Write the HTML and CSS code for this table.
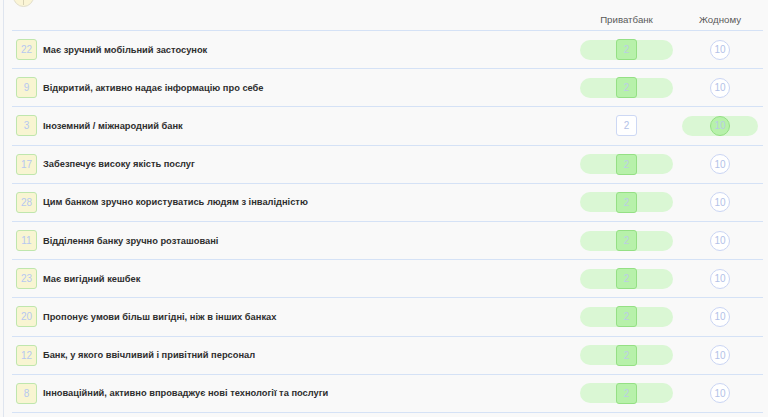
FILE: index.html
```html
<!DOCTYPE html>
<html lang="uk">
<head>
<meta charset="utf-8">
<link rel="stylesheet" href="styles.css">
</head>
<body>
<div class="frame">
  <div class="table">
    <div class="head">
      <div class="head-left"><span class="top-icon"></span></div>
      <div class="hcol">Приватбанк</div>
      <div class="hcol">Жодному</div>
    </div>

    <div class="row">
      <div class="label"><span class="badge">22</span><span class="text">Має зручний мобільний застосунок</span></div>
      <div class="cell"><span class="pill pill-a"><span class="sq sq-on">2</span></span></div>
      <div class="cell"><span class="circ">10</span></div>
    </div>
    <div class="row">
      <div class="label"><span class="badge">9</span><span class="text">Відкритий, активно надає інформацію про себе</span></div>
      <div class="cell"><span class="pill pill-a"><span class="sq sq-on">2</span></span></div>
      <div class="cell"><span class="circ">10</span></div>
    </div>
    <div class="row">
      <div class="label"><span class="badge">3</span><span class="text">Іноземний / міжнародний банк</span></div>
      <div class="cell"><span class="sq">2</span></div>
      <div class="cell"><span class="pill pill-b"><span class="circ circ-on">10</span></span></div>
    </div>
    <div class="row">
      <div class="label"><span class="badge">17</span><span class="text">Забезпечує високу якість послуг</span></div>
      <div class="cell"><span class="pill pill-a"><span class="sq sq-on">2</span></span></div>
      <div class="cell"><span class="circ">10</span></div>
    </div>
    <div class="row">
      <div class="label"><span class="badge">28</span><span class="text">Цим банком зручно користуватись людям з інвалідністю</span></div>
      <div class="cell"><span class="pill pill-a"><span class="sq sq-on">2</span></span></div>
      <div class="cell"><span class="circ">10</span></div>
    </div>
    <div class="row">
      <div class="label"><span class="badge">11</span><span class="text">Відділення банку зручно розташовані</span></div>
      <div class="cell"><span class="pill pill-a"><span class="sq sq-on">2</span></span></div>
      <div class="cell"><span class="circ">10</span></div>
    </div>
    <div class="row">
      <div class="label"><span class="badge">23</span><span class="text">Має вигідний кешбек</span></div>
      <div class="cell"><span class="pill pill-a"><span class="sq sq-on">2</span></span></div>
      <div class="cell"><span class="circ">10</span></div>
    </div>
    <div class="row">
      <div class="label"><span class="badge">20</span><span class="text">Пропонує умови більш вигідні, ніж в інших банках</span></div>
      <div class="cell"><span class="pill pill-a"><span class="sq sq-on">2</span></span></div>
      <div class="cell"><span class="circ">10</span></div>
    </div>
    <div class="row">
      <div class="label"><span class="badge">12</span><span class="text">Банк, у якого ввічливий і привітний персонал</span></div>
      <div class="cell"><span class="pill pill-a"><span class="sq sq-on">2</span></span></div>
      <div class="cell"><span class="circ">10</span></div>
    </div>
    <div class="row">
      <div class="label"><span class="badge">8</span><span class="text">Інноваційний, активно впроваджує нові технології та послуги</span></div>
      <div class="cell"><span class="pill pill-a"><span class="sq sq-on">2</span></span></div>
      <div class="cell"><span class="circ">10</span></div>
    </div>
  </div>
</div>
</body>
</html>
```

FILE: styles.css
```css
html, body {
  margin: 0;
  padding: 0;
  background: #f9f9f9;
  overflow: hidden;
}
body {
  font-family: "Liberation Sans", Arial, sans-serif;
  height: 417px;
}
.frame {
  margin-left: 3px;
  border-left: 1px solid #dfe5ef;
  padding-left: 8px;
  padding-right: 5px;
  height: 417px;
}
.table {
  display: flex;
  flex-direction: column;
}
.head, .row {
  display: grid;
  grid-template-columns: 1fr 101px 86px;
  align-items: center;
}
.head {
  height: 30px;
  border-bottom: 1px solid #d5e2f6;
  align-items: start;
}
.head-left {
  height: 30px;
}
.top-icon {
  display: block;
  width: 19px;
  height: 19px;
  margin-left: 1px;
  margin-top: -14px;
  border-radius: 50%;
  background: #fbf5d6;
  border: 1px solid #e0ddcc;
}
.top-icon::after {
  content: "";
  display: block;
  width: 1px;
  height: 9px;
  background: #d9d3b6;
  margin: 9px auto 0;
}
.hcol {
  text-align: center;
  font-size: 9.7px;
  color: #5a5a5a;
  padding-top: 14px;
}
.row {
  height: 37.2px;
  border-bottom: 1px solid #d5e2f6;
}
.label {
  display: flex;
  align-items: center;
  gap: 6px;
  padding-left: 4px;
}
.badge {
  width: 19px;
  height: 19px;
  border: 1px solid #bfe6ad;
  background: #f8f5d2;
  border-radius: 3px;
  display: flex;
  align-items: center;
  justify-content: center;
  font-size: 10px;
  color: #b6c8f0;
}
.text {
  font-size: 9.3px;
  font-weight: bold;
  color: #2e2e2e;
}
.cell {
  display: flex;
  justify-content: center;
  align-items: center;
}
.pill {
  height: 20px;
  border-radius: 10px;
  background: #daf7d4;
  display: flex;
  align-items: center;
  justify-content: center;
}
.pill-a { width: 93px; }
.pill-b { width: 76px; }
.sq {
  width: 19px;
  height: 19px;
  border: 1px solid #cdd8f4;
  background: #fff;
  border-radius: 3px;
  display: flex;
  align-items: center;
  justify-content: center;
  font-size: 10px;
  color: #b3c2e8;
}
.sq-on {
  background: #b7f1aa;
  border-color: #95e085;
  color: #bccde6;
}
.circ {
  width: 18px;
  height: 18px;
  border: 1px solid #cad5f4;
  background: #fff;
  border-radius: 50%;
  display: flex;
  align-items: center;
  justify-content: center;
  font-size: 10px;
  color: #b3c2e8;
}
.circ-on {
  background: #b7f1aa;
  border-color: #95e085;
  color: #b8cce4;
}
```
